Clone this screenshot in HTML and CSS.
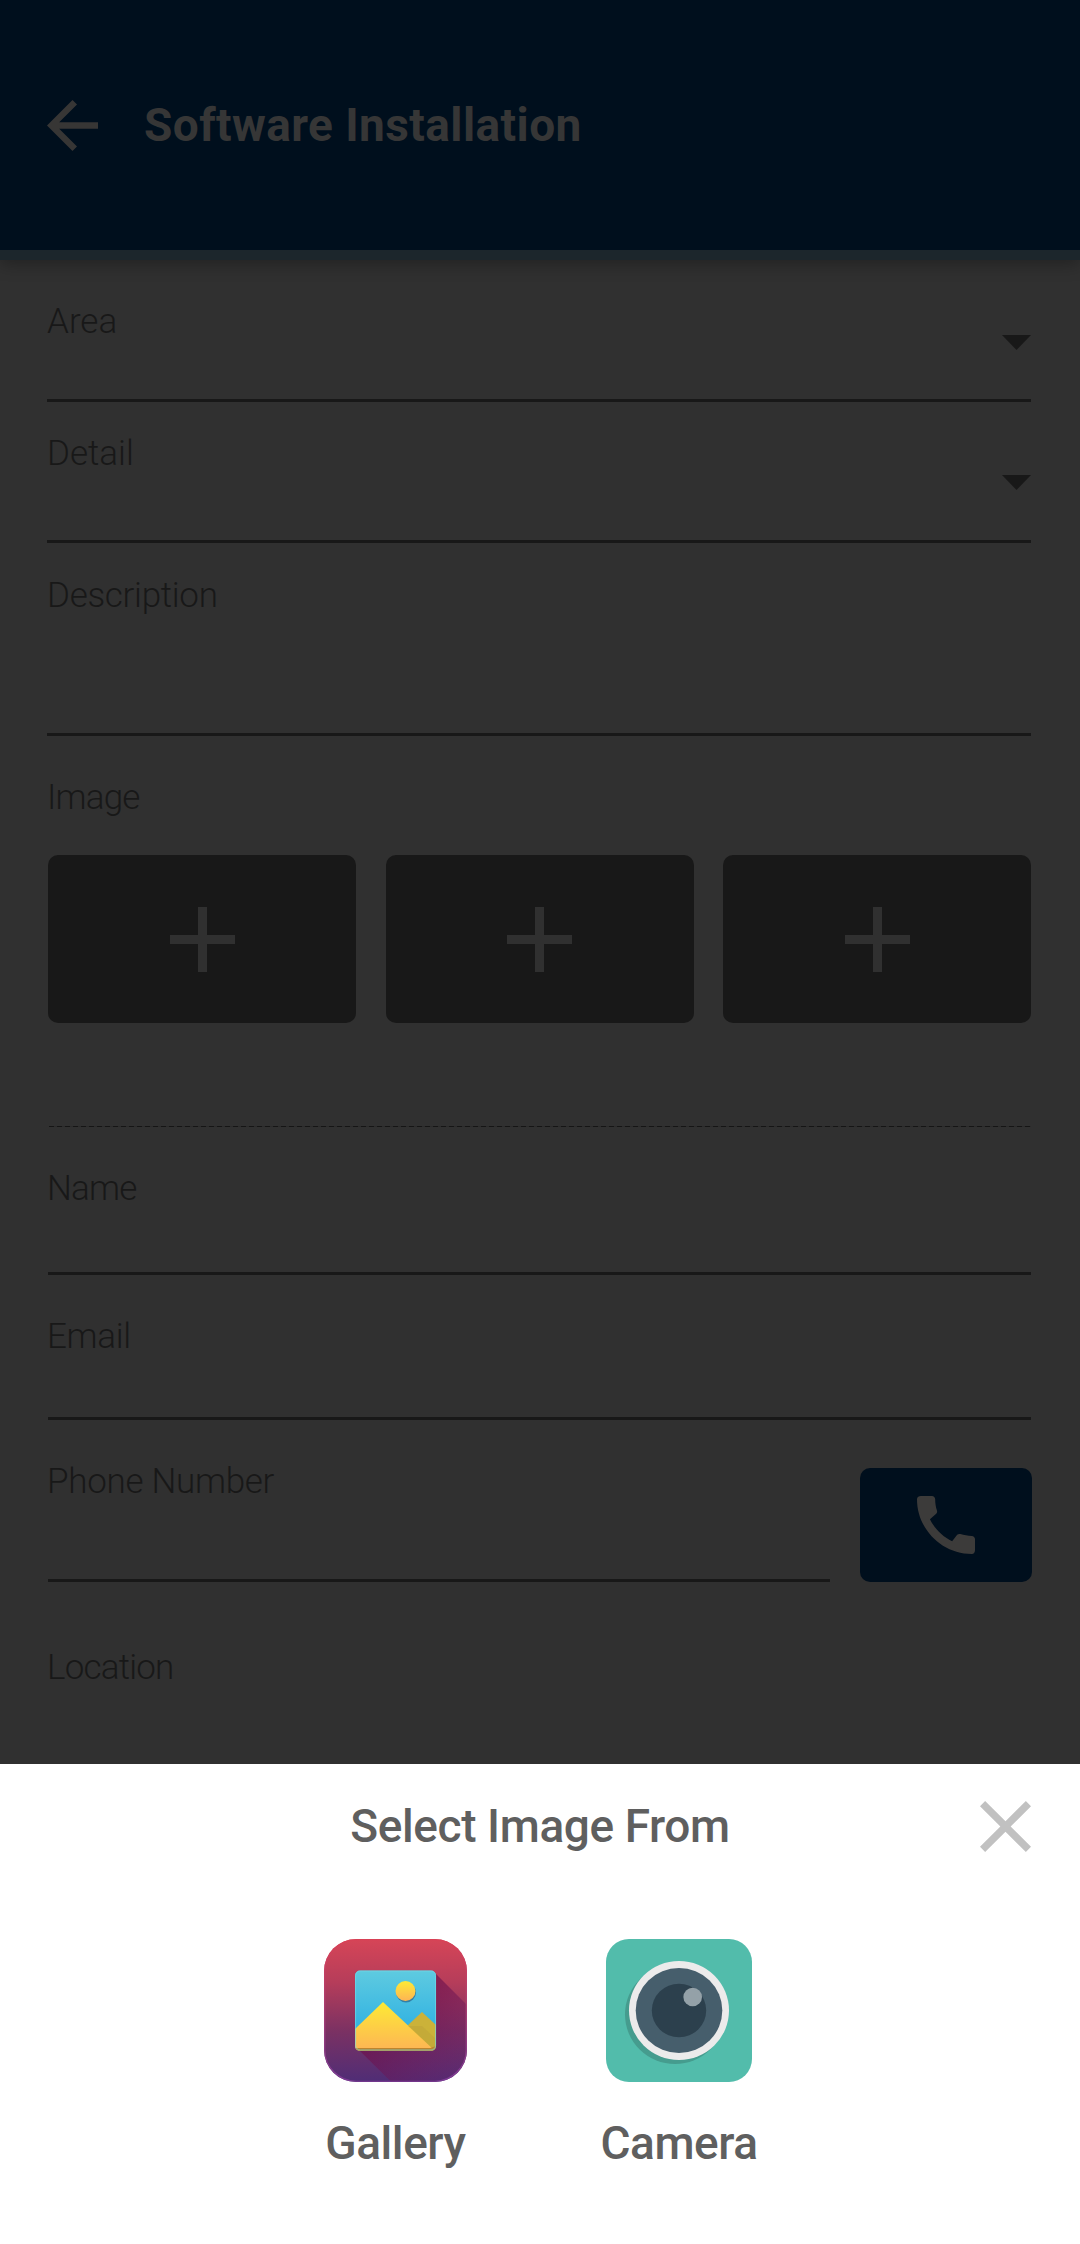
FILE: index.html
```html
<!DOCTYPE html>
<html lang="en">
<head>
<meta charset="utf-8">
<title>Software Installation</title>
<link rel="stylesheet" href="styles.css">
</head>
<body>
<div class="screen">
  <header class="appbar">
    <svg class="back" viewBox="4 4 16 16"><path d="M20 11H7.83l5.59-5.59L12 4l-8 8 8 8 1.41-1.41L7.83 13H20v-2z"/></svg>
    <h1 class="title">Software Installation</h1>
  </header>
  <main class="form">
    <div class="field area"><label class="label">Area</label><svg class="caret" viewBox="0 0 29 15"><path d="M0 0h29L14.500 15z"/></svg></div>
    <div class="field detail"><label class="label">Detail</label><svg class="caret" viewBox="0 0 29 15"><path d="M0 0h29L14.500 15z"/></svg></div>
    <div class="field description"><label class="label snug">Description</label></div>
    <div class="images">
      <label class="label tight">Image</label>
      <div class="tiles">
        <div class="tile"><svg class="plus" viewBox="0 0 65 65"><path d="M28 0h9v65h-9zM0 28h65v9H0z"/></svg></div>
        <div class="tile"><svg class="plus" viewBox="0 0 65 65"><path d="M28 0h9v65h-9zM0 28h65v9H0z"/></svg></div>
        <div class="tile"><svg class="plus" viewBox="0 0 65 65"><path d="M28 0h9v65h-9zM0 28h65v9H0z"/></svg></div>
      </div>
    </div>
    <div class="divider"></div>
    <div class="field name"><label class="label tight">Name</label></div>
    <div class="field email"><label class="label snug">Email</label></div>
    <div class="phone-row">
      <div class="field phone"><label class="label snug">Phone Number</label></div>
      <div class="call"><svg class="handset" viewBox="3 3 18 18"><path d="M20.010 15.380c-1.230 0-2.420-.2-3.530-.56-.35-.12-.74-.03-1.010.24l-1.570 1.970c-2.830-1.350-5.480-3.900-6.890-6.830l1.950-1.660c.27-.28.35-.67.24-1.020-.37-1.110-.56-2.300-.56-3.530 0-.54-.45-.99-.99-.99H4.190C3.650 3 3 3.240 3 3.990 3 13.280 10.730 21 20.010 21c.71 0 .99-.63.99-1.180v-3.450c0-.54-.45-.99-.99-.99z"/></svg></div>
    </div>
    <label class="label tight location">Location</label>
  </main>
  <section class="sheet">
    <div class="sheet-head">
      <h2 class="sheet-title">Select Image From</h2>
      <svg class="close" viewBox="5 5 14 14"><path d="M19 6.410L17.590 5 12 10.590 6.410 5 5 6.410 10.590 12 5 17.590 6.410 19 12 13.410 17.590 19 19 17.590 13.410 12z"/></svg>
    </div>
    <div class="sources">
      <div class="source gallery">
        <svg class="gallery-icon" viewBox="0 0 143 143">
          <defs>
            <linearGradient id="base" x1="0" y1="0" x2="0" y2="1"><stop offset="0" stop-color="#d64557"/><stop offset=".3" stop-color="#b63d5a"/><stop offset=".65" stop-color="#7a3163"/><stop offset="1" stop-color="#4f2d76"/></linearGradient>
            <linearGradient id="rim" x1="0" y1="0" x2="0" y2="1"><stop offset="0" stop-color="#d94055"/><stop offset="1" stop-color="#7c3a94"/></linearGradient>
            <linearGradient id="cast" gradientUnits="userSpaceOnUse" x1="72" y1="72" x2="143" y2="143"><stop offset="0" stop-color="#6c0f4a"/><stop offset="1" stop-color="#6c2068" stop-opacity=".2"/></linearGradient>
            <linearGradient id="sky" x1="0" y1="0" x2="0" y2="1"><stop offset="0" stop-color="#5fcbe0"/><stop offset=".7" stop-color="#33b3e2"/></linearGradient>
            <linearGradient id="hill" x1="0" y1="0" x2="0" y2="1"><stop offset="0" stop-color="#fdea35"/><stop offset="1" stop-color="#fdb455"/></linearGradient>
            <clipPath id="round"><rect width="143" height="143" rx="32"/></clipPath>
            <clipPath id="card"><rect x="31" y="31.500" width="81" height="80.500" rx="5"/></clipPath>
          </defs>
          <rect width="143" height="143" rx="32" fill="url(#base)"/>
          <g clip-path="url(#round)"><path d="M110 33l90 90v80h-72L34 110z" fill="url(#cast)" opacity=".7"/></g>
          <rect x=".75" y=".75" width="141.500" height="141.500" rx="31.500" fill="none" stroke="url(#rim)" stroke-width="1.200"/>
          <g clip-path="url(#card)">
            <rect x="31" y="31" width="81" height="81" fill="url(#sky)"/>
            <path d="M83 87l15-14 14 13v26H83z" fill="#cbb239"/>
            <path d="M31 90l28-27 49 46v3H31z" fill="url(#hill)"/>
            <path d="M84 87l24 22h4v-9L98 87z" fill="#b99d36" opacity=".4"/>
            <path d="M31 109h75l6-2v5H31z" fill="#bd842d"/>
          </g>
          <rect x="31.600" y="32" width="80" height="79" rx="4.500" fill="none" stroke="#72dce5" stroke-width="1" opacity=".65"/>
          <circle cx="82" cy="53.500" r="10" fill="#347fa5"/>
          <circle cx="81.500" cy="52" r="10" fill="url(#hill)"/>
        </svg>
        <span class="source-name">Gallery</span>
      </div>
      <div class="source camera">
        <svg class="camera-icon" viewBox="0 0 146 143">
          <rect width="146" height="143" rx="23" fill="#52bcab"/>
          <ellipse cx="69" cy="75.500" rx="50" ry="49.500" fill="#459c8e"/>
          <ellipse cx="73" cy="71.500" rx="50" ry="49.500" fill="#ecebeb"/>
          <ellipse cx="73" cy="71.500" rx="43.300" ry="42.500" fill="#465e6c"/>
          <ellipse cx="73" cy="71.500" rx="27.200" ry="26.700" fill="#2c404d"/>
          <circle cx="86.700" cy="58" r="9.300" fill="#94a1a8"/>
        </svg>
        <span class="source-name">Camera</span>
      </div>
    </div>
  </section>
</div>
</body>
</html>
```
FILE: styles.css
```css
* { box-sizing: border-box; }

body { margin: 0; background: #303030; font-family: Roboto, "Liberation Sans", sans-serif; }

svg { display: block; flex: none; }

.screen { width: 1080px; height: 2244px; display: flex; flex-direction: column; overflow: hidden; }

.appbar {
  height: 260px;
  flex: none;
  display: flex;
  align-items: center;
  gap: 46px;
  padding: 0 47px;
  background: #000f1d;
  border-bottom: 10px solid #1c262c;
  box-shadow: 0 4px 16px rgba(0, 0, 0, .3);
}
.back { width: 51px; height: 51px; fill: #373635; }
.title { margin: 0; font-size: 46px; line-height: 54px; font-weight: 700; letter-spacing: .42px; color: #363636; }

.form { flex: 1; padding: 42px 49px 0 47px; display: flex; flex-direction: column; }
.label { display: block; font-size: 35px; line-height: 40px; font-weight: 350; color: #181818; white-space: nowrap; }
.label.tight { letter-spacing: -.8px; }
.label.snug { letter-spacing: -.3px; }

.field { flex: none; display: flex; justify-content: space-between; align-items: flex-start; border-bottom: 3px solid #181818; }
.caret { width: 29px; height: 15px; fill: #181818; }
.area { height: 100px; }
.area .caret { margin-top: 33px; }
.detail { height: 141px; padding-top: 32px; }
.detail .caret { margin-top: 41px; }
.description { height: 193px; padding-top: 33px; }

.images { padding: 42px 0 0 1px; }
.images .label { margin-left: -1px; }
.tiles { display: flex; gap: 29.6px; margin-top: 37px; }
.tile { flex: none; width: 308px; height: 168px; display: flex; align-items: center; justify-content: center; border-radius: 10px; background: #181818; }
.plus { width: 65px; height: 65px; fill: #303030; }

.divider {
  height: 1px;
  flex: none;
  margin: 103px 0 0 2px;
  background: repeating-linear-gradient(90deg, #151515 0 5px, #2a2a2a 5px 8px);
}

.name { height: 148px; padding-top: 42px; margin-left: 1px; }
.email { height: 145px; padding-top: 42px; margin-left: 1px; }
.name .label, .email .label, .phone .label { margin-left: -1px; }

.phone-row { display: flex; align-items: flex-end; gap: 30px; margin: 0 -1px 0 1px; }
.phone { flex: 1; height: 162px; padding-top: 42px; }
.call { width: 172px; height: 114px; display: flex; align-items: center; justify-content: center; border-radius: 10px; background: #000f1d; }
.handset { width: 58px; height: 58px; fill: #3c3b3a; }
.location { margin-top: 66px; }

.sheet { height: 480px; flex: none; padding: 37px 49px 0; background: #fff; color: #5f5f5f; }
.sheet-head { display: grid; grid-template-columns: 1fr auto 1fr; align-items: start; }
.sheet-title { grid-column: 2; margin: 0; font-size: 46px; line-height: 51px; font-weight: 500; letter-spacing: -.4px; }
.close { justify-self: end; width: 51px; height: 51px; fill: #c1c1c1; }

.sources { display: flex; gap: 127px; margin: 87px 0 0 268px; }
.source { display: flex; flex-direction: column; align-items: center; }
.gallery { width: 157px; }
.camera { width: 156px; }
.gallery-icon { width: 143px; height: 143px; }
.camera-icon { width: 146px; height: 143px; }
.source-name { margin-top: 34px; font-size: 46px; line-height: 54px; font-weight: 500; letter-spacing: -.45px; }
```
